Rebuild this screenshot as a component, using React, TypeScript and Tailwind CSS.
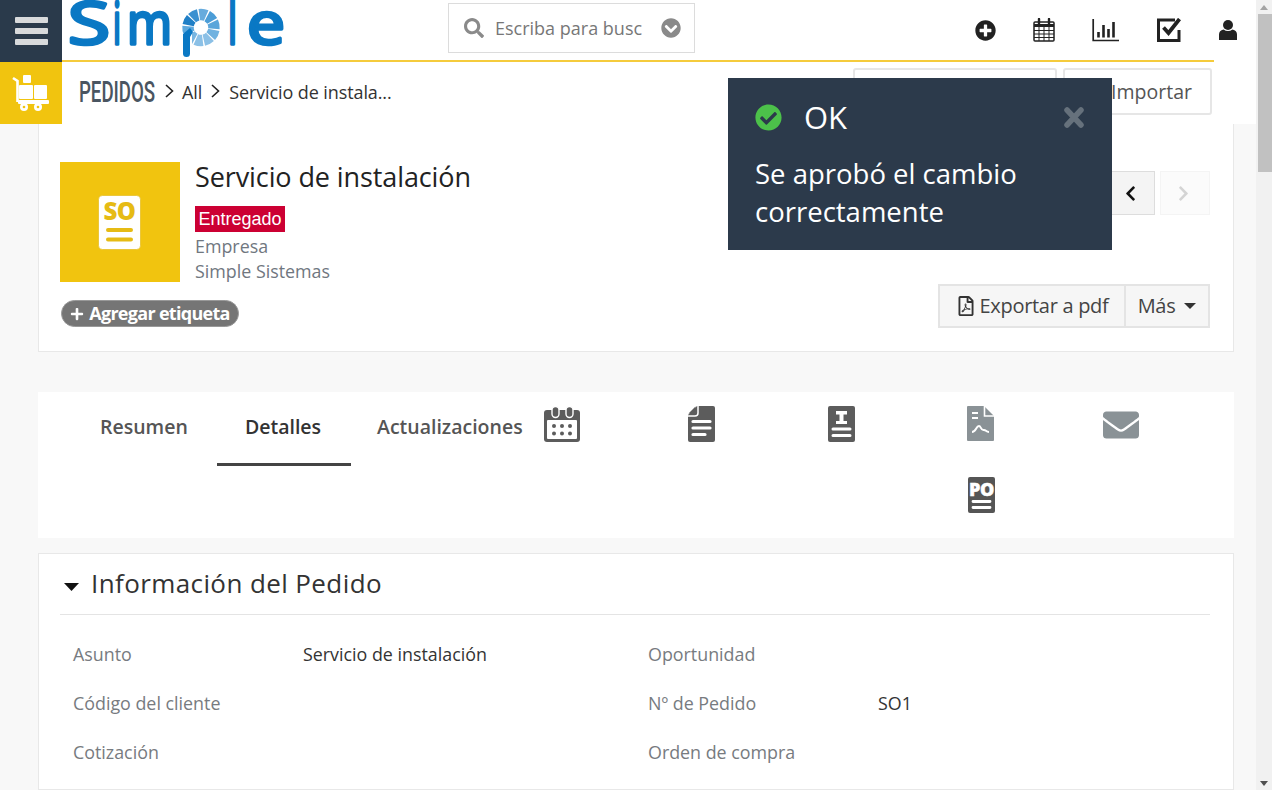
import React from "react";
import {
  FaSearch,
  FaChevronCircleDown,
  FaPlusCircle,
  FaCheckCircle,
  FaRegFilePdf,
  FaChevronLeft,
  FaChevronRight,
  FaEnvelope,
  FaPlus,
} from "react-icons/fa";

function Logo() {
  const colors = ["#1f7fc6", "#3a90d0", "#66abdd", "#4b9dd7", "#5aa5da", "#70b2e0", "#8bc0e6", "#8bc0e6", "#78b6e2", "#5ca8dd"];
  const pt = (deg: number, r: number) => {
    const t = (deg * Math.PI) / 180;
    return `${(201 + r * Math.cos(t)).toFixed(2)} ${(27.5 + r * Math.sin(t)).toFixed(2)}`;
  };
  return (
    <svg width="224" height="60" viewBox="66 0 224 60" className="block">
      <g fill="#0a78c4" stroke="#0a78c4" strokeWidth="3.4" strokeLinejoin="round" fontFamily="'Open Sans', sans-serif" fontSize="58">
        <text x="68" y="44" textLength="42" lengthAdjust="spacingAndGlyphs">S</text>
        <text x="113" y="44" textLength="8" lengthAdjust="spacingAndGlyphs">i</text>
        <text x="127" y="44" textLength="45" lengthAdjust="spacingAndGlyphs">m</text>
        <text x="228" y="44" textLength="9" lengthAdjust="spacingAndGlyphs">l</text>
        <text x="247" y="44" textLength="38" lengthAdjust="spacingAndGlyphs">e</text>
      </g>
      {colors.map((c, i) => {
        const a = -172 + i * 36;
        return <path key={i} d={`M${pt(a + 2.5, 13)} A13 13 0 0 1 ${pt(a + 33.5, 13)}`} stroke={c} strokeWidth="11.5" fill="none" />;
      })}
      <path d="M186.5 33 V53.5" stroke="#fff" strokeWidth="11" />
      <path d="M186.5 36 V53.5" stroke="#0a78c4" strokeWidth="7" strokeLinecap="round" />
      <path d="M183 34 L190 28 L193 32 L190 37 H183 Z" fill="#0a78c4" />
    </svg>
  );
}

function CartIcon() {
  return (
    <svg width="38" height="40" viewBox="0 0 38 40">
      <g fill="#fff">
        <rect x="11" y="1" width="8" height="8" rx="1" />
        <rect x="7" y="11" width="14" height="14" rx="1" />
        <rect x="22" y="11" width="13" height="14" rx="1" />
        <rect x="6" y="26" width="31" height="4" rx="1" />
        <circle cx="12" cy="33" r="4" />
        <circle cx="26" cy="33" r="4" />
      </g>
      <path d="M1 4 L5.5 7 V28" stroke="#fff" strokeWidth="2.6" fill="none" />
      <circle cx="12" cy="33" r="1.3" fill="#f1c40f" />
      <circle cx="26" cy="33" r="1.3" fill="#f1c40f" />
    </svg>
  );
}

function TopCalendar() {
  return (
    <svg width="22" height="24" viewBox="0 0 22 24" fill="none" stroke="#222">
      <rect x="1" y="4" width="20" height="19" rx="1" strokeWidth="1.5" />
      <path d="M1 7.5 H21" strokeWidth="3" />
      <path d="M1 12.5 H21 M1 16 H21 M1 19.5 H21 M6 9 V23 M11 9 V23 M16 9 V23" strokeWidth="1" />
      <path d="M6 1 V5.5 M16 1 V5.5" strokeWidth="2.4" strokeLinecap="round" />
    </svg>
  );
}

function TopChart() {
  return (
    <svg width="27" height="23" viewBox="0 0 27 23" fill="none" stroke="#222">
      <path d="M1.2 0 V21.5 H27" strokeWidth="1.7" />
      <path d="M6.5 18.5 V13 M11.5 18.5 V6 M16.5 18.5 V10 M21.5 18.5 V3" strokeWidth="2.6" />
    </svg>
  );
}

function TopCheck() {
  return (
    <svg width="25" height="24" viewBox="0 0 25 24" fill="none" stroke="#222">
      <path d="M18 2 H1.5 V22.5 H22 V12" strokeWidth="3" />
      <path d="M6.5 9.5 L11.5 15 L22.5 1" strokeWidth="3.8" />
    </svg>
  );
}

function TopUser() {
  return (
    <svg width="18" height="20" viewBox="0 0 18 20">
      <circle cx="9" cy="5" r="5" fill="#222" />
      <path d="M0 20 V14.5 Q0 10.5 4.5 9.5 Q9 12.5 13.5 9.5 Q18 10.5 18 14.5 V20 Z" fill="#222" />
    </svg>
  );
}

function Chevron() {
  return (
    <svg width="9" height="14" viewBox="0 0 9 14" fill="none" className="mb-[3px]">
      <path d="M1 1 L7.5 7 L1 13" stroke="#222" strokeWidth="1.6" />
    </svg>
  );
}

function BigCalendar() {
  return (
    <svg width="36" height="36" viewBox="0 0 36 36">
      <path d="M3 4 H33 a3 3 0 0 1 3 3 V33 a3 3 0 0 1 -3 3 H3 a3 3 0 0 1 -3 -3 V7 a3 3 0 0 1 3 -3 Z" fill="#5c5c5c" />
      <rect x="3" y="14" width="30" height="19" rx="1" fill="#fff" />
      <rect x="8" y="0.5" width="7" height="11" rx="3.5" fill="#5c5c5c" stroke="#fff" strokeWidth="1.4" />
      <rect x="22" y="0.5" width="7" height="11" rx="3.5" fill="#5c5c5c" stroke="#fff" strokeWidth="1.4" />
      <g fill="#5c5c5c">
        {[10, 18, 26].map((x) => (
          <React.Fragment key={x}>
            <circle cx={x} cy="20" r="2" />
            <circle cx={x} cy="27.5" r="2" />
          </React.Fragment>
        ))}
      </g>
    </svg>
  );
}

function DocIcon() {
  return (
    <svg width="27" height="36" viewBox="0 0 27 36">
      <path d="M9 0 H25 a2 2 0 0 1 2 2 V34 a2 2 0 0 1 -2 2 H2 a2 2 0 0 1 -2 -2 V9 Z" fill="#5c5c5c" />
      <path d="M7.5 0.5 V7.5 H0.5 Z" fill="#5c5c5c" />
      <path d="M10 0 V7 a3 3 0 0 1 -3 3 H0" stroke="#fff" strokeWidth="1.5" fill="none" />
      <g stroke="#fff" strokeWidth="3.2" strokeLinecap="round">
        <path d="M5 15.5 H22 M5 22 H22 M5 28.5 H17" />
      </g>
    </svg>
  );
}

function QuoteIcon() {
  return (
    <svg width="27" height="36" viewBox="0 0 27 36">
      <rect width="27" height="36" rx="2" fill="#5c5c5c" />
      <path d="M8 5 H19 V8.5 H15.5 V15 H19 V18 H8 V15 H11.5 V8.5 H8 Z" fill="#fff" />
      <g stroke="#fff" strokeWidth="3" strokeLinecap="round">
        <path d="M5 23 H22 M5 29.5 H22" />
      </g>
    </svg>
  );
}

function PdfDocIcon() {
  return (
    <svg width="27" height="35" viewBox="0 0 27 35">
      <path d="M0 1 a1 1 0 0 1 1 -1 H17 L27 10 V34 a1 1 0 0 1 -1 1 H1 a1 1 0 0 1 -1 -1 Z" fill="#8a9296" />
      <path d="M17.5 0 V10 H27" stroke="#fff" strokeWidth="1.6" fill="none" />
      <path d="M5 7 H11 M5 12 H11" stroke="#fff" strokeWidth="2.2" />
      <path d="M5 26 C9 26 9 20 12 20 C14 20 14 25 17 24 C19 24 19 26 22 26" stroke="#fff" strokeWidth="2" fill="none" />
    </svg>
  );
}

function PoIcon() {
  return (
    <svg width="27" height="36" viewBox="0 0 27 36">
      <rect width="27" height="36" rx="2" fill="#555" />
      <text x="13.5" y="18.5" textAnchor="middle" fontFamily="'Open Sans', sans-serif" fontWeight="800" fontSize="18" letterSpacing="-0.4" fill="#fff" stroke="#fff" strokeWidth="0.4">PO</text>
      <g stroke="#fff" strokeWidth="2.8" strokeLinecap="round">
        <path d="M5 24.5 H22 M5 30.5 H22" />
      </g>
    </svg>
  );
}

function SoIcon() {
  return (
    <svg width="44" height="56" viewBox="0 0 44 56">
      <rect x="0.5" y="0.5" width="42" height="54" rx="4" fill="#fff" stroke="#e0b50c" strokeWidth="0.6" />
      <text x="21.5" y="25" textAnchor="middle" fontFamily="'Open Sans', sans-serif" fontWeight="800" fontSize="24" letterSpacing="-0.5" fill="#e6bb14">SO</text>
      <path d="M10 35 H33 M10 44.5 H33" stroke="#e6bb14" strokeWidth="4" strokeLinecap="round" />
    </svg>
  );
}

function Field({ label, value }: { label: string; value?: string }) {
  return (
    <div className="flex h-[49px] items-center">
      <div className="w-[243px] shrink-0 pl-[13px] text-[#777b80]">{label}</div>
      <div className="text-[#333]">{value}</div>
    </div>
  );
}

export default function App() {
  return (
    <div className="relative flex h-[790px] w-[1272px] overflow-hidden bg-[#f8f8f8] font-['Open_Sans',sans-serif]">
      <div className="flex w-[1256px] flex-col">
        <header className="flex h-[62px] bg-white">
          <div className="flex w-[62px] flex-col items-center justify-center gap-[5px] bg-[#2a3a4b]">
            <div className="h-[6px] w-[33px] rounded-[1px] bg-[#d8dadc]" />
            <div className="h-[6px] w-[33px] rounded-[1px] bg-[#d8dadc]" />
            <div className="h-[6px] w-[33px] rounded-[1px] bg-[#d8dadc]" />
          </div>
          <div className="flex w-[1152px] border-b-2 border-[#f5cb3c]">
            <div className="ml-[4px] w-[382px] shrink-0">
              <Logo />
            </div>
            <div className="mt-[3px] flex h-[50px] w-[247px] shrink-0 items-center border border-[#dcdcdc] pl-[15px]">
              <FaSearch className="shrink-0 text-[#8a8a8a]" size={20} />
              <span className="ml-[11px] w-[147px] shrink-0 overflow-hidden text-[18px] whitespace-nowrap text-[#777]">Escriba para busc</span>
              <FaChevronCircleDown className="ml-[19px] shrink-0 text-[#8a8a8a]" size={20} />
            </div>
            <div className="flex h-[60px] flex-1 items-center">
              <FaPlusCircle className="ml-[280px] shrink-0 text-[#222]" size={21} />
              <div className="ml-[37px] shrink-0"><TopCalendar /></div>
              <div className="ml-[37px] shrink-0"><TopChart /></div>
              <div className="ml-[38px] shrink-0"><TopCheck /></div>
              <div className="ml-[37px] shrink-0"><TopUser /></div>
            </div>
          </div>
        </header>
        <div className="flex h-[62px] bg-white">
          <div className="flex w-[62px] items-center justify-center bg-[#f1c40f] pr-[1px] pt-[1px]">
            <CartIcon />
          </div>
          <div className="flex items-center pb-[2px] pl-[17px] text-[18px] tracking-[-0.1px] text-[#333]">
            <span className="w-[76px] origin-left scale-x-[0.645] font-['Roboto',sans-serif] text-[29px] font-medium leading-none whitespace-nowrap text-[#4a5561]">PEDIDOS</span>
            <span className="ml-[10px] flex items-center"><Chevron /></span>
            <span className="ml-[8px]">All</span>
            <span className="ml-[9px] flex items-center"><Chevron /></span>
            <span className="ml-[9px]">Servicio de instala...</span>
          </div>
          <div className="ml-auto mr-[44px] mt-[6px] flex h-[47px] gap-[6px] text-[19.5px] text-[#555]">
            <div className="h-full w-[204px] rounded-[3px] border-2 border-[#e6e6e6]" />
            <div className="flex h-full w-[149px] items-center justify-end rounded-[3px] border-2 border-[#e6e6e6] pr-[18px]">Importar</div>
          </div>
        </div>
        <main className="ml-[38px] flex w-[1196px] flex-1 flex-col text-[17.85px]">
          <section className="flex h-[228px] justify-between border-x border-b border-[#e8e8e8] bg-white pl-[21px] pr-[23px]">
            <div className="pt-[38px]">
              <div className="flex">
                <div className="flex h-[120px] w-[120px] items-center justify-center bg-[#f1c40f] pt-[2px]">
                  <SoIcon />
                </div>
                <div className="ml-[15px]">
                  <h1 className="mt-[-1px] text-[27px] leading-[32px] tracking-[-0.1px] text-[#222]">Servicio de instalación</h1>
                  <div className="mt-[13px] flex h-[26px] w-[90px] items-center justify-center bg-[#cc0033] font-['Liberation_Sans',sans-serif] text-[18px] text-white">Entregado</div>
                  <div className="mt-[2px] leading-[25px] text-[#70777f]">Empresa</div>
                  <div className="leading-[25px] text-[#70777f]">Simple Sistemas</div>
                </div>
              </div>
              <div className="ml-[1px] mt-[16px] flex h-[27px] w-[178px] items-center justify-center gap-[5px] rounded-full border border-[#999] bg-[#757575] text-[18px] font-bold tracking-[-0.7px] text-white">
                <FaPlus size={14} />
                Agregar etiqueta
              </div>
            </div>
            <div className="flex flex-col items-end pt-[47px]">
              <div className="flex h-[44px] gap-[5px]">
                <div className="flex w-[48px] items-center justify-center border border-[#ddd] bg-[#f4f4f4] pr-[2px]">
                  <FaChevronLeft size={17} className="text-[#111]" />
                </div>
                <div className="flex w-[50px] items-center justify-center border border-[#f4f4f4] bg-[#fbfbfb] pr-[4px]">
                  <FaChevronRight size={17} className="text-[#d4d4d4]" />
                </div>
              </div>
              <div className="mt-[69px] flex h-[44px] w-[272px] border-2 border-[#e4e4e4] bg-[#f6f6f6] text-[20px] tracking-[-0.3px] text-[#444]">
                <div className="flex w-[186px] items-center justify-center gap-[4px] border-r-2 border-[#e4e4e4]">
                  <FaRegFilePdf size={20} className="text-[#333]" />
                  Exportar a pdf
                </div>
                <div className="flex flex-1 items-center justify-center gap-[9px]">
                  Más
                  <svg width="12" height="6" viewBox="0 0 12 6"><path d="M0 0 H12 L6 6 Z" fill="#333" /></svg>
                </div>
              </div>
            </div>
          </section>
          <section className="mt-[40px] grid h-[146px] grid-cols-[145px_134px_141px_repeat(5,140px)] grid-rows-[74px_72px] bg-white pl-[34px] text-[19.5px] font-semibold">
            <div className="flex items-center justify-start pb-[4px] pl-[28px] text-[#555]">Resumen</div>
            <div className="flex items-center justify-center border-b-[3px] border-[#444] pb-[1px] pr-[2px] text-[#333]">Detalles</div>
            <div className="flex items-center whitespace-nowrap pb-[4px] pl-[26px] text-[#555]">Actualizaciones</div>
            <div className="flex items-center justify-center pb-[10px]"><BigCalendar /></div>
            <div className="flex items-center justify-center pb-[11px] pr-[2px]"><DocIcon /></div>
            <div className="flex items-center justify-center pb-[11px] pr-[2px]"><QuoteIcon /></div>
            <div className="flex items-center justify-center pb-[11px] pr-[3px]"><PdfDocIcon /></div>
            <div className="flex items-center justify-center pb-[8px] pr-[2px]"><FaEnvelope size={36} className="text-[#8a9296]" /></div>
            <div className="col-start-7 row-start-2 flex justify-center pr-[2px] pt-[11px]"><PoIcon /></div>
          </section>
          <section className="mt-[15px] flex-1 border border-[#e8e8e8] bg-white pl-[21px] pr-[23px]">
            <div className="flex h-[61px] items-center border-b border-[#e4e4e4] pb-[1px]">
              <svg width="15" height="8" viewBox="0 0 15 8" className="ml-[4px] mt-[7px]"><path d="M0 0 H15 L7.5 8 Z" fill="#111" /></svg>
              <h2 className="ml-[12px] text-[26px] tracking-[0.4px] text-[#333]">Información del Pedido</h2>
            </div>
            <div className="mt-[15px] grid grid-cols-[575px_1fr]">
              <Field label="Asunto" value="Servicio de instalación" />
              <Field label="Oportunidad" />
              <Field label="Código del cliente" />
              <Field label="Nº de Pedido" value="SO1" />
              <Field label="Cotización" />
              <Field label="Orden de compra" />
            </div>
          </section>
        </main>
      </div>
      <div className="flex w-[16px] flex-col bg-[#f1f1f1]">
        <div className="flex h-[14px] items-center justify-center">
          <svg width="8" height="5" viewBox="0 0 8 5"><path d="M0 5 L4 0 L8 5 Z" fill="#a3a3a3" /></svg>
        </div>
        <div className="ml-[2px] h-[158px] w-[14px] bg-[#c1c1c1]" />
        <div className="mt-auto flex h-[14px] items-center justify-center">
          <svg width="8" height="5" viewBox="0 0 8 5"><path d="M0 0 L4 5 L8 0 Z" fill="#505050" /></svg>
        </div>
      </div>
      <div className="absolute left-[728px] top-[78px] h-[172px] w-[384px] bg-[#2c3a4b] px-[27px] text-white">
        <div className="flex h-[78px] items-center">
          <span className="relative flex h-[27px] w-[27px] items-center justify-center">
            <span className="absolute h-[16px] w-[16px] bg-[#2c3a4b]" />
            <FaCheckCircle size={27} className="relative text-[#4cc14a]" />
          </span>
          <span className="ml-[22px] text-[31px]">OK</span>
          <svg width="20" height="21" viewBox="0 0 20 21" className="ml-auto mr-[1px]">
            <path d="M3 3 L17 18 M17 3 L3 18" stroke="#66717c" strokeWidth="5.5" strokeLinecap="round" />
          </svg>
        </div>
        <p className="mt-[-1px] text-[27.5px] leading-[38px]">Se aprobó el cambio<br />correctamente</p>
      </div>
    </div>
  );
}
